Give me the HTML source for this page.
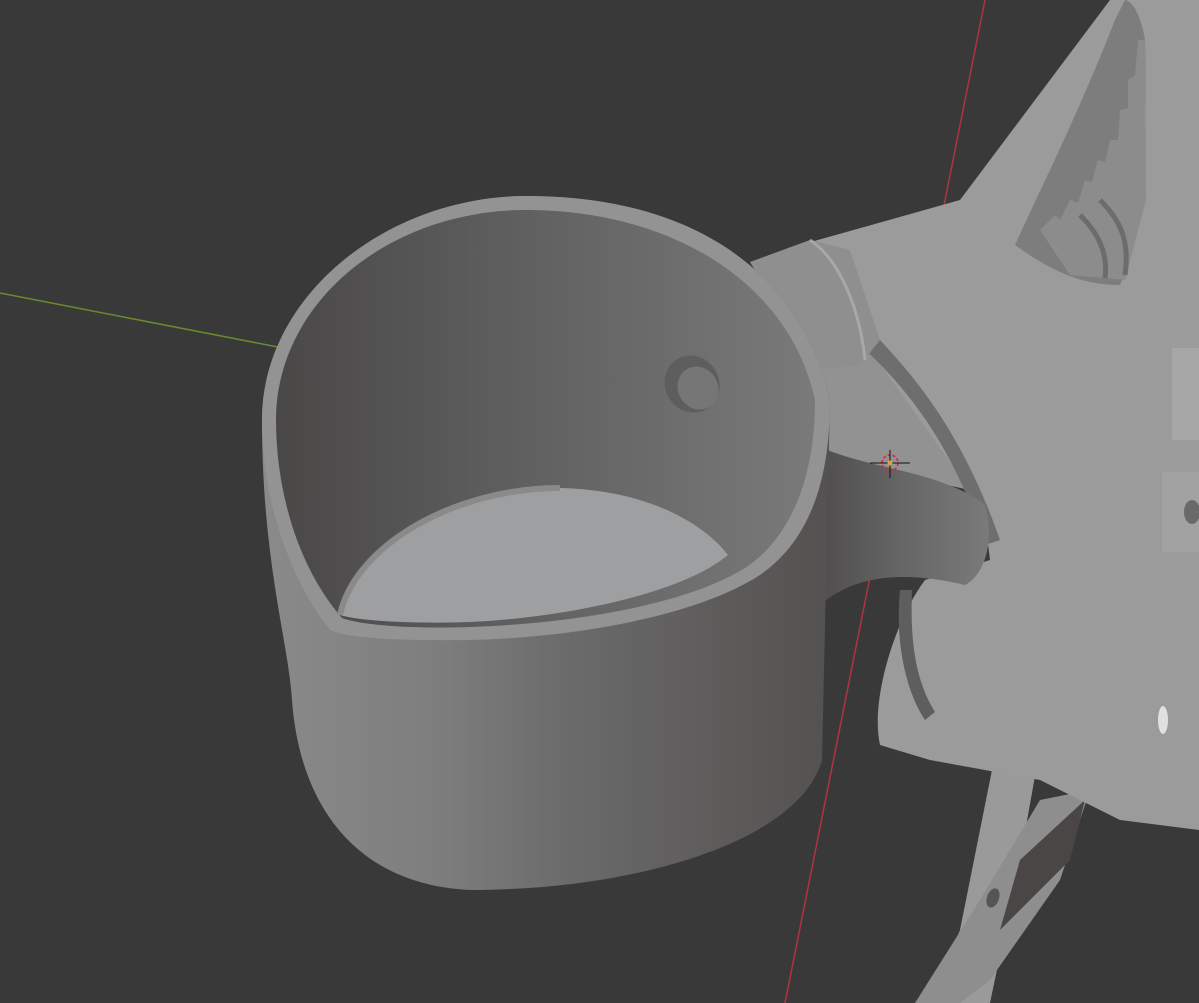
<!DOCTYPE html>
<html><head><meta charset="utf-8"><style>
html,body{margin:0;padding:0;background:#393939;overflow:hidden}
svg{display:block}
</style></head><body>
<svg width="1199" height="1003" viewBox="0 0 1199 1003" xmlns="http://www.w3.org/2000/svg">
<defs>
<linearGradient id="body" x1="0" y1="0" x2="1" y2="0">
<stop offset="0" stop-color="#8a8a8a"/><stop offset="0.3" stop-color="#7e7e7e"/>
<stop offset="0.55" stop-color="#6a6a6a"/><stop offset="0.8" stop-color="#5e5b5b"/><stop offset="1" stop-color="#545151"/>
</linearGradient>
<linearGradient id="inner" x1="0" y1="0" x2="1" y2="0">
<stop offset="0" stop-color="#4a4747"/><stop offset="0.4" stop-color="#5d5d5d"/><stop offset="1" stop-color="#7a7a7a"/>
</linearGradient>
<linearGradient id="arm" x1="0" y1="0" x2="1" y2="0">
<stop offset="0" stop-color="#4e4b4b"/><stop offset="0.5" stop-color="#666"/><stop offset="1" stop-color="#7a7a7a"/>
</linearGradient>
</defs>
<rect width="1199" height="1003" fill="#393939"/>
<line x1="0" y1="293" x2="283" y2="348" stroke="#6a8a2e" stroke-width="1.5"/>
<line x1="985" y1="0" x2="785" y2="1003" stroke="#b0343e" stroke-width="1.5"/>

<!-- lower legs -->
<path d="M1000,730 L1045,720 L1020,860 L990,1003 L930,1003 L960,930 Z" fill="#9a9a9a"/>
<path d="M1040,800 L1090,790 L1060,880 L990,980 L960,1003 L915,1003 L980,900 Z" fill="#8e8e8e"/>
<path d="M1020,860 L1085,800 L1070,860 L1000,930 Z" fill="#4a4646"/>
<ellipse cx="993" cy="898" rx="6" ry="10" fill="#555" transform="rotate(20 993 898)"/>

<!-- right main body -->
<path d="M800,245 L960,200 L1110,0 L1199,0 L1199,830 L1120,820 L1040,780 L930,760 L880,745 C870,700 895,620 925,580 L990,560 L985,520 L930,440 L880,370 Z" fill="#9b9b9b"/>
<!-- fill between tube and arm -->
<path d="M815,360 L870,350 L920,420 L970,490 L900,475 L815,470 Z" fill="#929292"/>
<!-- gear pocket -->
<path d="M1015,245 C1050,270 1080,285 1120,285 C1140,240 1148,150 1145,40 C1140,10 1130,0 1125,0 L1115,20 C1080,110 1040,190 1015,245 Z" fill="#7d7d7d"/>
<path d="M1040,230 L1055,215 L1060,220 L1070,200 L1078,203 L1085,180 L1092,182 L1098,160 L1105,162 L1110,140 L1118,140 L1120,110 L1128,108 L1128,80 L1135,75 L1138,40 L1145,40 L1146,200 L1125,280 L1070,275 Z" fill="#8c8c8c"/>
<path d="M1100,200 C1120,220 1130,240 1125,275" stroke="#6c6c6c" stroke-width="5" fill="none"/>
<path d="M1080,215 C1100,235 1108,255 1105,278" stroke="#6c6c6c" stroke-width="5" fill="none"/>
<!-- slot between arm and body -->
<path d="M870,330 C920,380 965,440 1000,540 L985,545 C955,450 910,390 860,345 Z" fill="#6e6e6e"/>
<path d="M900,590 C895,640 905,690 925,720 L935,712 C915,680 910,640 912,590 Z" fill="#5e5e5e"/>
<!-- side tabs -->
<rect x="1172" y="348" width="27" height="92" fill="#a6a6a6"/>
<rect x="1162" y="472" width="37" height="80" fill="#a2a2a2"/>
<ellipse cx="1192" cy="512" rx="8" ry="12" fill="#6a6a6a"/>
<ellipse cx="1163" cy="720" rx="5" ry="14" fill="#e0e0e0"/>
<!-- tube -->
<path d="M750,262 L810,240 L850,250 L880,340 L860,365 L815,370 Z" fill="#8f8f8f"/>
<path d="M810,240 C840,260 860,310 865,360" stroke="#a8a8a8" stroke-width="3" fill="none"/>
<!-- arm strap -->
<path d="M815,445 C870,470 940,470 985,505 C995,540 985,575 965,585 C900,570 850,575 815,610 Z" fill="url(#arm)"/>

<!-- cup outer body -->
<path d="M262,420 C262,300 380,200 520,196 C690,194 800,270 830,400 L822,760 C800,840 640,890 470,890 C360,885 300,810 292,700 C288,640 262,560 262,420 Z" fill="url(#body)"/>
<!-- rim top -->
<path d="M262,420 C262,300 380,200 520,196 C690,194 800,270 830,400 C830,480 810,540 760,575 C690,620 560,638 470,640 C400,641 345,638 330,630 C290,580 262,500 262,420 Z" fill="#939393"/>
<!-- inner -->
<path d="M276,420 C276,305 385,212 522,210 C675,209 790,285 815,400 C815,470 795,535 745,568 C680,608 560,624 470,627 C410,629 360,625 342,618 C300,570 276,495 276,420 Z" fill="url(#inner)"/>
<!-- floor -->
<path d="M340,615 C355,545 455,488 560,488 C650,490 705,525 728,555 C680,595 560,618 470,622 C410,624 360,621 340,615 Z" fill="#9d9fa1"/>
<path d="M340,615 C355,545 455,488 560,488" stroke="#8a8a8a" stroke-width="6" fill="none"/>
<!-- hole -->
<ellipse cx="692" cy="384" rx="27" ry="29" transform="rotate(-30 692 384)" fill="#5e5e5e"/>
<ellipse cx="698" cy="388" rx="20" ry="22" transform="rotate(-30 698 388)" fill="#767676"/>

<!-- cursor -->
<circle cx="890" cy="463" r="8" fill="none" stroke="#d23" stroke-width="1.5" stroke-dasharray="3 2"/>
<line x1="870" y1="463" x2="910" y2="463" stroke="#111" stroke-width="1"/>
<line x1="890" y1="450" x2="890" y2="478" stroke="#111" stroke-width="1"/>
<circle cx="890" cy="463" r="2.5" fill="#e8a030"/>
</svg>
</body></html>
